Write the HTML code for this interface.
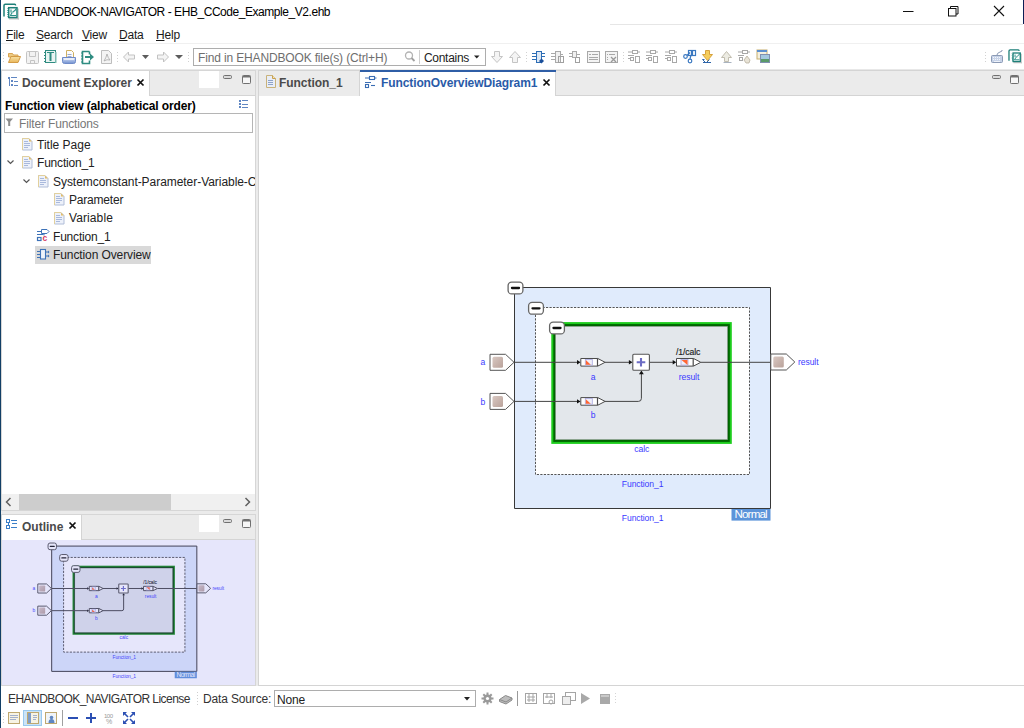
<!DOCTYPE html>
<html><head><meta charset="utf-8">
<style>
*{box-sizing:border-box;margin:0;padding:0}
html,body{width:1024px;height:728px;overflow:hidden;background:#fff}
body{position:relative;font-family:"Liberation Sans",sans-serif;font-size:12px;color:#000}
.a{position:absolute}
.t{position:absolute;white-space:pre;line-height:14px;letter-spacing:-0.45px}
.b{font-weight:bold;letter-spacing:-0.15px}
</style></head><body>

<!-- window edge -->
<div class="a" style="left:0;top:0;width:1px;height:728px;background:#123f66"></div>
<div class="a" style="left:1023px;top:0;width:1px;height:24px;background:#0c1f55"></div>

<!-- TITLE BAR -->
<div id="title" class="a" style="left:1px;top:0;width:1022px;height:24px;background:#fff"></div>
<div class="t" style="left:24px;top:5px;color:#000">EHANDBOOK-NAVIGATOR - EHB_CCode_Example_V2.ehb</div>
<svg class="a" style="left:0;top:0" width="1024" height="24" viewBox="0 0 1024 24">
<path d="M903 11.5h10.5" stroke="#111" stroke-width="1"/>
<rect x="948.5" y="8.5" width="7.5" height="7.5" fill="#fff" stroke="#111"/>
<path d="M950.5 8.5v-2h7.5v7.5h-2" fill="none" stroke="#111"/>
<path d="M994 6l10 10M1004 6l-10 10" stroke="#111" stroke-width="1.1"/>
<g id="appicon">
<rect x="9" y="18" width="10" height="1.5" fill="#c8c8c8"/>
<rect x="17.8" y="8.5" width="1" height="11" fill="#c8c8c8"/>
<path d="M4 16.5v-11q0-1.3 1.3-1.3h9.5q0.8 0 0.8 1.2" fill="none" stroke="#1d7f78" stroke-width="1.5"/>
<rect x="8.7" y="7.7" width="8.3" height="9.8" fill="#fbfdfd" stroke="#1d7f78" stroke-width="1.5"/>
<path d="M7.5 8.5l1 1-1 1 1 1-1 1 1 1-1 1 1 1-1 1" fill="none" stroke="#2a8f87" stroke-width="0.9"/>
<path d="M10.5 15.5q1-3 3-4t3-3.5M11 9.5v3M10 15.5h6" fill="none" stroke="#2a8f87" stroke-width="1.1"/>
<circle cx="12.5" cy="12.5" r="1" fill="#8cc7c1"/>
</g>
</svg>

<div class="a" style="left:610px;top:24px;width:413px;height:1px;background:#e6e6e6"></div>
<!-- MENU -->
<div class="t" style="left:6px;top:28px;letter-spacing:-0.2px;color:#1a1a1a"><u>F</u>ile</div>
<div class="t" style="left:36px;top:28px;letter-spacing:-0.2px;color:#1a1a1a"><u>S</u>earch</div>
<div class="t" style="left:82px;top:28px;letter-spacing:-0.2px;color:#1a1a1a"><u>V</u>iew</div>
<div class="t" style="left:119px;top:28px;letter-spacing:-0.2px;color:#1a1a1a"><u>D</u>ata</div>
<div class="t" style="left:156px;top:28px;letter-spacing:-0.2px;color:#1a1a1a"><u>H</u>elp</div>
<div class="a" style="left:1px;top:43px;width:1023px;height:1px;background:#f0f0f0"></div>

<!-- TOOLBAR -->
<svg class="a" style="left:0;top:44px" width="1024" height="25" viewBox="0 44 1024 25">
<defs>
<g id="grip" fill="#d2d2d2"><rect x="0" y="0" width="1" height="1"/><rect x="0" y="3" width="1" height="1"/><rect x="0" y="6" width="1" height="1"/><rect x="0" y="9" width="1" height="1"/></g>
<linearGradient id="gfold" x1="0" y1="0" x2="0" y2="1"><stop offset="0" stop-color="#f7e2a6"/><stop offset="1" stop-color="#e9b65a"/></linearGradient>
<linearGradient id="gtray" x1="0" y1="0" x2="0" y2="1"><stop offset="0" stop-color="#dfe7f7"/><stop offset="1" stop-color="#6f8fd0"/></linearGradient>
</defs>
<use href="#grip" x="3" y="52"/>
<!-- folder -->
<path d="M8.5 53.5h4l1 1.5h4.5v2h-9.5z" fill="#eccb83" stroke="#d9a453" stroke-width="1"/>
<path d="M8.5 62.5l2.5-6h9.5l-2.5 6z" fill="url(#gfold)" stroke="#d39b45" stroke-width="1"/>
<!-- save (disabled) -->
<rect x="26.5" y="51.5" width="12" height="12" rx="1" fill="#f2f2f2" stroke="#c4c4c4"/>
<path d="M29.5 51.5v5h6v-5M30.5 63.5v-3h4v3" fill="none" stroke="#c4c4c4"/>
<!-- notebook teal -->
<rect x="45.5" y="50.5" width="10" height="12" fill="#e9f4f2" stroke="#2f8c81"/>
<rect x="47" y="52" width="7" height="1" fill="#2f8c81"/>
<path d="M44 52.5h2M44 55.5h2M44 58.5h2M44 61.5h2" stroke="#2f8c81"/>
<rect x="49.5" y="53" width="2" height="8" fill="#2f8c81"/>
<rect x="55" y="52" width="1.5" height="11" fill="#7bb9b0"/>
<!-- print -->
<path d="M66.5 50.5h5l2 2v6h-7z" fill="#fbfbfb" stroke="#d0b060"/>
<path d="M67.5 54.5h4M67.5 56.5h4" stroke="#9aaad0"/>
<path d="M62.5 57.5h13v4q0 2-2 2h-9q-2 0-2-2z" fill="url(#gtray)" stroke="#6f8bc8"/>
<rect x="64" y="58" width="10" height="2" fill="#e9eef9"/>
<!-- export -->
<path d="M89.5 51.5h-7v12h7v-3M89.5 51.5v3" fill="none" stroke="#2f8c81" stroke-width="1.6"/>
<path d="M81 53h2M81 56h2M81 59h2M81 62h2" stroke="#2f8c81"/>
<path d="M85 56h5v-2.5l4 3.5-4 3.5v-2.5h-5z" fill="#2f8c81"/>
<!-- pdf disabled -->
<path d="M101.5 50.5h7l3 3v10h-10z" fill="#f4f4f4" stroke="#bdbdbd"/>
<path d="M104 61q2-3 3-7q1 4 3 6q-3-1-6 1z" fill="none" stroke="#a8a8a8" stroke-width="0.8"/>
<use href="#grip" x="117" y="52"/>
<!-- back -->
<path d="M123.5 57l5-5v3h6v4h-6v3z" fill="#f4f4f4" stroke="#c2c2c2"/>
<path d="M142 55h7l-3.5 4z" fill="#5c5c5c"/>
<path d="M168.5 57l-5-5v3h-6v4h6v3z" fill="#f4f4f4" stroke="#c2c2c2"/>
<path d="M175 55h8l-4 4z" fill="#5c5c5c"/>
<use href="#grip" x="188" y="52"/>
<!-- find box -->
<rect x="193.5" y="48.5" width="292" height="17" fill="#fff" stroke="#adadad"/>
<rect x="419" y="50" width="1" height="14" fill="#cfcfcf"/>
<circle cx="409" cy="55.5" r="3.5" fill="#fff" stroke="#b3b3b3" stroke-width="1.3"/>
<path d="M411.5 58l3 3" stroke="#a0a0a0" stroke-width="1.8"/>
<path d="M474 55.5h5.5l-2.75 3z" fill="#222"/>
<!-- down/up arrows disabled -->
<path d="M494.5 51.5h5v5h3l-5.5 6-5.5-6h3z" fill="#f4f4f4" stroke="#c4c4c4"/>
<path d="M512.5 62.5h5v-5h3l-5.5-6-5.5 6h3z" fill="#f4f4f4" stroke="#c4c4c4"/>
<use href="#grip" x="526" y="52"/>
<!-- blue chip -->
<rect x="536.5" y="51.5" width="5" height="11" fill="#dce8f5" stroke="#2d6db5"/>
<path d="M532 53.5h4M532 56.5h4M532 59.5h4M542 53.5h3M542 56.5h3" stroke="#2d6db5"/>
<path d="M539 61l2.5-2.5 2.5 2.5-2.5 2.5z" fill="#1a4f9a"/>
<!-- gray chip -->
<rect x="555.5" y="51.5" width="5" height="11" fill="#f0f0f0" stroke="#a9a9a9"/>
<path d="M551 53.5h4M551 56.5h4M551 59.5h4M561 54.5h2" stroke="#a9a9a9"/>
<rect x="558.5" y="56.5" width="5" height="6" fill="none" stroke="#a0a0a0"/>
<!-- gray chip2 -->
<rect x="572.5" y="51.5" width="4" height="6" fill="#f0f0f0" stroke="#a9a9a9"/>
<path d="M569 53.5h3M569 56.5h3M577 54.5h3" stroke="#a9a9a9"/>
<rect x="575.5" y="57.5" width="4" height="5" fill="none" stroke="#a0a0a0"/>
<!-- list -->
<rect x="587.5" y="51.5" width="12" height="11" fill="#f4f4f4" stroke="#a8a8a8"/>
<path d="M589 54.5h2M592 54.5h6M589 57.5h9M589 59.5h9" stroke="#a8a8a8"/>
<!-- list x -->
<rect x="605.5" y="51.5" width="12" height="11" fill="#f4f4f4" stroke="#a8a8a8"/>
<path d="M607 54.5h1M609 54.5h6M607 57.5h1M607 59.5h1" stroke="#a8a8a8"/>
<path d="M611 57l5 5M616 57l-5 5" stroke="#999" stroke-width="1.3"/>
<use href="#grip" x="623" y="52"/>
<!-- network icons -->
<g id="net" fill="none" stroke="#a8a8a8">
<rect x="632.5" y="50.5" width="5" height="3"/>
<path d="M628 52h4M638 52h2M628 55.5h6M628 58.5h2"/>
<rect x="630.5" y="57.5" width="3" height="3"/>
<rect x="635.5" y="56.5" width="4" height="6"/>
</g>
<use href="#net" x="18"/>
<use href="#net" x="37"/>
<!-- blue scissors -->
<g fill="none" stroke="#3a78c0" stroke-width="1.2">
<rect x="688.5" y="50.5" width="3" height="5"/><rect x="692.5" y="50.5" width="3" height="5"/>
<circle cx="685.5" cy="56.5" r="1.8"/><circle cx="690" cy="61" r="1.8"/>
<path d="M687 55.5l3-3M690 59l1-4"/>
</g>
<!-- yellow down -->
<path d="M704.5 59.5h-2l3.5 3.5 3.5-3.5" fill="none" stroke="#2d64a8"/>
<path d="M705.5 50.5h4v4h3l-5 6-5-6h3z" fill="#f5cd5c" stroke="#d6a23e"/>
<path d="M703 62.5h8" stroke="#2d64a8"/>
<!-- gray up -->
<path d="M723.5 62.5h8" stroke="#a9b3c0"/>
<path d="M724.5 61.5v-4h-3l5-6 5 6h-3v4z" fill="#ecebe2" stroke="#c1bdaf"/>
<!-- net hand -->
<g fill="none" stroke="#a8a8a8"><rect x="742.5" y="50.5" width="5" height="3"/><path d="M738 52h4M748 52h2M738 55.5h6"/><rect x="739.5" y="57.5" width="3" height="3"/></g>
<path d="M744 60l3-4 3 4-1 3h-3z" fill="#e8e3d6" stroke="#b8b0a0" stroke-width="0.8"/>
<!-- windows -->
<rect x="757" y="50" width="10" height="9" fill="#f4f0e0" stroke="#c8b070"/>
<rect x="757" y="50" width="10" height="2" fill="#5b8fd0"/>
<rect x="760.5" y="54.5" width="9" height="8" fill="#a4c8e0" stroke="#8090b0"/>
<rect x="761" y="59" width="8" height="3" fill="#5a9a6a"/>
<!-- right side -->
<use href="#grip" x="985" y="52"/>
<rect x="991.5" y="55.5" width="11" height="7" rx="1" fill="#c7d3e8" stroke="#8b9ab5"/>
<path d="M993 57.5h8M993 59.5h8" stroke="#f2f5fb" stroke-width="1" stroke-dasharray="1,1"/><rect x="994" y="61" width="6" height="1" fill="#eef2fa"/>
<path d="M997 55q0-2 3-3t2-2" fill="none" stroke="#8b9ab5"/>
<use href="#appicon" transform="translate(1005.5 46.3) scale(0.87)"/>
</svg>
<div class="t" style="left:198px;top:51px;color:#6e6e6e;letter-spacing:-0.15px">Find in EHANDBOOK file(s) (Ctrl+H)</div>
<div class="t" style="left:424px;top:51px;color:#222;letter-spacing:-0.3px">Contains</div>

<div class="a" style="left:1px;top:69px;width:1023px;height:2px;background:#e8e8e8"></div>

<div class="a" style="left:1px;top:71px;width:1023px;height:615px;background:#ebebeb"></div>
<!-- LEFT TOP PANEL -->
<div class="a" style="left:1px;top:70px;width:255px;height:441px;border:1px solid #d6d6d6;background:#fff"></div>
<div class="a" style="left:149px;top:71px;width:106px;height:25px;background:#ebebeb;border-bottom:1px solid #d4d4d4;border-left:1px solid #d4d4d4"></div>

<!-- Document Explorer tab -->
<svg class="a" style="left:0;top:70px" width="258" height="200" viewBox="0 70 258 200">
<!-- tab icon: tree -->
<g fill="#5f86c2"><rect x="8" y="77" width="2" height="2"/><rect x="11" y="77" width="6" height="1"/><rect x="9" y="79" width="1" height="7"/><rect x="11" y="80" width="2" height="2"/><rect x="14" y="81" width="4" height="1"/><rect x="11" y="84" width="2" height="2"/><rect x="14" y="85" width="4" height="1"/></g>
<path d="M137.5 79.5l6 6M143.5 79.5l-6 6" stroke="#111" stroke-width="1.7"/>
<rect x="199" y="71" width="20" height="17" fill="#fff"/>
<rect x="223.5" y="75.5" width="8" height="3" rx="1" fill="#dadada" stroke="#707070"/>
<rect x="242.5" y="75.5" width="8" height="8" rx="0.8" fill="#f6f6f6" stroke="#707070"/>
<rect x="243" y="76" width="7" height="1.5" fill="#707070"/>
<!-- function view options icon -->
<g fill="#5f86c2"><rect x="239" y="100" width="2" height="2"/><rect x="242" y="100" width="6" height="1"/><rect x="239" y="103" width="2" height="2"/><rect x="242" y="104" width="6" height="1"/><rect x="239" y="106" width="2" height="2"/><rect x="242" y="107" width="6" height="1"/></g>
<!-- filter box -->
<rect x="4.5" y="113.5" width="248" height="19" fill="#fff" stroke="#b5b5b5"/>
<path d="M5.5 118.5h7.5l-2.8 3.2v4.3h-2v-4.3z" fill="#8c8c8c"/>
<!-- tree icons -->
<defs>
<g id="doc"><path d="M0.5 0.5h6.5l3 3v8.5h-9.5z" fill="#edf1fa" stroke="#b0bdd8"/><path d="M0.5 12v-11.5h6.5" fill="none" stroke="#e2d09c"/><path d="M7 0.5v3h3z" fill="#e3bd68"/><rect x="2" y="3" width="4" height="1" fill="#a9b9dc"/><rect x="2" y="5" width="6" height="1" fill="#a9b9dc"/><rect x="2" y="7" width="6" height="1" fill="#a9b9dc"/><rect x="2" y="9" width="4" height="1" fill="#a9b9dc"/></g>
</defs>
<use href="#doc" x="22" y="138"/>
<use href="#doc" x="22" y="156"/>
<use href="#doc" x="38" y="175"/>
<use href="#doc" x="54" y="193"/>
<use href="#doc" x="54" y="212"/>
<path d="M7.5 160.5l3 3 3-3" fill="none" stroke="#555" stroke-width="1.2"/>
<path d="M23.5 179.5l3 3 3-3" fill="none" stroke="#555" stroke-width="1.2"/>
<!-- function_1 network icon -->
<path d="M41.5 229.5h5.5l2 2-2 2h-5.5z" fill="#fff" stroke="#3d72b8"/>
<path d="M37 231.5h4.5M37 234.5h6.5M44 233.5v2" stroke="#3d72b8" stroke-width="1"/>
<rect x="37.5" y="237.5" width="3.5" height="3" fill="#fff" stroke="#3d72b8" stroke-width="1.2"/>
<text x="42.6" y="241" font-family="Liberation Sans" font-size="8.5" font-weight="bold" fill="#d63a5f">c</text>
<rect x="35" y="246" width="116" height="18" fill="#d9d9d9"/>
<rect x="40.5" y="249.5" width="5" height="9.5" fill="#eef3fa" stroke="#3d72b8" stroke-width="1.1"/><path d="M37 251.5h3M37 254.5h3M37 257.5h3M46 252h2.5M46 256h2.5" stroke="#3d72b8"/><path d="M48 250.5l1.5 1.5-1.5 1.5zM48 254.5l1.5 1.5-1.5 1.5z" fill="#3d72b8"/>
</svg>
<div class="t b" style="left:22px;top:76px;color:#4a4a4a;letter-spacing:-0.05px">Document Explorer</div>
<div class="t b" style="left:5px;top:99px;color:#000;letter-spacing:-0.12px">Function view (alphabetical order)</div>
<div class="t" style="left:19px;top:117px;color:#777;letter-spacing:-0.15px">Filter Functions</div>
<div class="t" style="left:37px;top:138px;color:#222;letter-spacing:0px">Title Page</div>
<div class="t" style="left:37px;top:156px;color:#222;letter-spacing:-0.2px">Function_1</div>
<div class="a" style="left:53px;top:174px;width:202px;height:16px;overflow:hidden"><div class="t" style="left:0;top:0.6px;color:#222;letter-spacing:-0.05px">Systemconstant-Parameter-Variable-Class</div></div>
<div class="t" style="left:69px;top:193px;color:#222;letter-spacing:-0.2px">Parameter</div>
<div class="t" style="left:69px;top:211px;color:#222;letter-spacing:0.1px">Variable</div>
<div class="t" style="left:53px;top:230px;color:#222;letter-spacing:-0.2px">Function_1</div>
<div class="t" style="left:53px;top:248px;color:#222;letter-spacing:-0.1px">Function Overview</div>
<!-- h scrollbar -->
<div class="a" style="left:2px;top:494px;width:253px;height:16px;background:#f0f0f0"></div>
<div class="a" style="left:19px;top:494px;width:152px;height:16px;background:#cdcdcd"></div>
<svg class="a" style="left:0;top:494px" width="258" height="16"><path d="M10.5 4l-4 4 4 4M245.5 4l4 4-4 4" fill="none" stroke="#606060" stroke-width="1.5"/></svg>

<!-- LEFT BOTTOM PANEL -->
<div class="a" style="left:1px;top:514px;width:255px;height:172px;border:1px solid #d6d6d6;background:#fff"></div>
<div class="a" style="left:81px;top:515px;width:174px;height:25px;background:#ebebeb;border-bottom:1px solid #d4d4d4;border-left:1px solid #d4d4d4"></div>

<svg class="a" style="left:0;top:514px" width="258" height="172" viewBox="0 514 258 172">
<g fill="none" stroke="#3b7fc8" stroke-width="1"><rect x="6.5" y="519.5" width="3" height="3"/><rect x="6.5" y="525.5" width="3" height="3"/></g>
<g fill="#3b7fc8"><rect x="11" y="520" width="6" height="1"/><rect x="12" y="523" width="5" height="1"/><rect x="11" y="527" width="6" height="1"/><rect x="8" y="522" width="1" height="4"/></g>
<path d="M69.5 522.5l6 6M75.5 522.5l-6 6" stroke="#111" stroke-width="1.7"/>
<rect x="199" y="515" width="20" height="17" fill="#fff"/>
<rect x="223.5" y="519.5" width="8" height="3" rx="1" fill="#dadada" stroke="#707070"/>
<rect x="242.5" y="519.5" width="8" height="8" rx="0.8" fill="#f6f6f6" stroke="#707070"/>
<rect x="243" y="520" width="7" height="1.5" fill="#707070"/>
<rect x="2" y="540" width="253" height="145" fill="#fff"/>
<g transform="translate(-240.04 383.07) scale(0.567)" style="--g1:#128f12;--g2:#003c00;--bs:#555;--bw:1"><use href="#diag"/></g>
<rect x="2" y="540" width="253" height="145" fill="rgb(118,118,232)" fill-opacity="0.185"/>
</svg>
<div class="t b" style="left:22px;top:520px;color:#4a4a4a;letter-spacing:0px">Outline</div>

<!-- RIGHT PANEL -->
<div class="a" style="left:258px;top:70px;width:766px;height:616px;border:1px solid #d4d4d4;border-right:none;background:#fff"></div>
<div class="a" style="left:259px;top:71px;width:765px;height:25px;background:#ebebeb;border-bottom:1px solid #d4d4d4"></div>
<!-- right tabs -->
<div class="a" style="left:259px;top:71px;width:101px;height:25px;background:#ebebeb;border-right:1px solid #d4d4d4"></div>
<div class="a" style="left:360px;top:70px;width:196px;height:26px;background:#fff;border-right:1px solid #d4d4d4"></div>
<div class="a" style="left:360px;top:70px;width:196px;height:2px;background:#2f5ea6"></div>
<svg class="a" style="left:258px;top:70px" width="766" height="26" viewBox="258 70 766 26">
<path d="M266.5 75.5h6l3 3v9h-9z" fill="#e8edf7" stroke="#c9b27a"/><path d="M272.5 75.5v3h3" fill="#f3e2b4" stroke="#c9a050"/><path d="M268 80.5h5M268 82.5h5M268 84.5h5" stroke="#8ea3c9"/>
<g fill="none" stroke="#3a6db3" stroke-width="1.1"><rect x="369.5" y="76.5" width="5" height="3"/><path d="M365 78h4.5M374.5 78h2M365 82.5h6"/><rect x="365.5" y="84.5" width="3" height="3"/><path d="M371 85.5h4"/></g>
<path d="M543.5 79.5l6 6M549.5 79.5l-6 6" stroke="#111" stroke-width="1.7"/>
<rect x="992.5" y="75.5" width="8" height="3" rx="1" fill="#dadada" stroke="#707070"/>
<rect x="1010.5" y="75.5" width="8" height="8" rx="0.8" fill="#f6f6f6" stroke="#707070"/>
<rect x="1011" y="76" width="7" height="1.5" fill="#707070"/>
</svg>
<div class="t b" style="left:279px;top:76px;color:#4a4a4a;letter-spacing:-0.05px">Function_1</div>
<div class="t b" style="left:381px;top:76px;color:#2a5ba8;letter-spacing:-0.1px">FunctionOverviewDiagram1</div>

<svg width="0" height="0" style="position:absolute">
<defs>
<linearGradient id="gport" x1="0" y1="0" x2="1" y2="1"><stop offset="0" stop-color="#d9c8c2"/><stop offset="1" stop-color="#b9a29a"/></linearGradient>
<g id="btn"><rect x="0.6" y="0.6" width="14.8" height="11.8" rx="3.5" fill="#fff" style="stroke:var(--bs,#666);stroke-width:var(--bw,1.3)" vector-effect="non-scaling-stroke"/><path d="M4.5 6.5h7" stroke="#111" stroke-width="2.3" stroke-linecap="round"/></g>
<g id="blk">
<path d="M0.5 -3.8h17l7.3 3.8-7.3 3.8h-17z" fill="#fff" stroke="#4a4a4a" vector-effect="non-scaling-stroke" stroke-linejoin="round"/>
<path d="M17.2 -3.8v7.6" stroke="#4a4a4a" vector-effect="non-scaling-stroke" stroke-width="1.2"/>
<rect x="5" y="-2.8" width="7" height="5.6" fill="#f0f0fa" stroke="#a9a9e0" stroke-width="0.8"/>
<path d="M5.5 -2.2v4.6h5z" fill="#ff6633"/>
</g>
<g id="blk2">
<path d="M0.5 -3.8h17l7.3 3.8-7.3 3.8h-17z" fill="#fff" stroke="#4a4a4a" vector-effect="non-scaling-stroke" stroke-linejoin="round"/>
<path d="M17.2 -3.8v7.6" stroke="#4a4a4a" vector-effect="non-scaling-stroke" stroke-width="1.2"/>
<rect x="5" y="-2.8" width="7" height="5.6" fill="#f0f0fa" stroke="#a9a9e0" stroke-width="0.8"/>
<path d="M5.5 -2.2h6v4.8z" fill="#ff6633"/>
</g>
<g id="ah"><path d="M-3.6 -2.2l3.6 2.2-3.6 2.2z" fill="#111"/></g>
<g id="port">
<path d="M0.5 0.5h15.5l8.5 8-8.5 8h-15.5z" fill="#fff" stroke="#555" vector-effect="non-scaling-stroke"/>
<rect x="3" y="3" width="10.5" height="11" rx="1.5" fill="url(#gport)"/>
</g>
<g id="diag" font-family="Liberation Sans">
<!-- outer -->
<rect x="514.5" y="287.5" width="256" height="221" fill="#e0ebfc" stroke="#383838" vector-effect="non-scaling-stroke"/>
<!-- dashed -->
<rect x="535.5" y="307.5" width="214" height="167" fill="#fff" stroke="#555" vector-effect="non-scaling-stroke" stroke-dasharray="2.2,1.3"/>
<!-- green -->
<rect x="551.3" y="322.1" width="180.5" height="121.8" style="fill:var(--g1,#1ccc1c)"/>
<rect x="553.3" y="324.1" width="176.5" height="117.8" style="fill:var(--g2,#006400)"/>
<rect x="555.5" y="326.3" width="172.1" height="113.4" fill="#e3e7eb" stroke="#7a8a7a" stroke-width="0.5"/>
<!-- lines -->
<path d="M514 362.3h63M605 362.3h24.5M649.7 362.3h23.5M701 362.3h69.5" stroke="#444" vector-effect="non-scaling-stroke" stroke-width="1"/>
<path d="M514 401.4h63M605 401.4h33.4q3 0 3-3v-24.5" fill="none" stroke="#444" vector-effect="non-scaling-stroke" stroke-width="1"/>
<use href="#ah" x="580.6" y="362.3"/>
<use href="#ah" x="580.6" y="401.4"/>
<use href="#ah" x="632.5" y="362.3"/>
<use href="#ah" x="676.3" y="362.3"/>
<path d="M641.4 370.6l2.4 3.6h-4.8z" fill="#111"/>
<use href="#blk" x="580.3" y="362.3"/>
<use href="#blk" x="580.3" y="401.4"/>
<use href="#blk2" x="676" y="362.3"/>
<!-- sum -->
<rect x="632.8" y="354.3" width="16.6" height="16" rx="1" fill="#fff" stroke="#555" vector-effect="non-scaling-stroke" stroke-width="1.1"/>
<path d="M636.7 362.3h8.6M641 358v8.6" stroke="#6c6cc4" stroke-width="2.1"/>
<!-- ports -->
<use href="#port" x="489.5" y="353.8"/>
<use href="#port" x="489.5" y="392.9"/>
<use href="#port" x="770.3" y="353.5"/>
<!-- buttons -->
<use href="#btn" x="507.5" y="281.5"/>
<use href="#btn" x="528" y="301.8"/>
<use href="#btn" x="549" y="321.5"/>
<!-- labels -->
<g fill="#3a3aff" font-size="8.6" letter-spacing="-0.1">
<text x="480.6" y="365.3">a</text>
<text x="480.6" y="404.5">b</text>
<text x="590.8" y="379.8">a</text>
<text x="590.8" y="418.2">b</text>
<text x="678.8" y="379.8">result</text>
<text x="798" y="365.3">result</text>
<text x="634.3" y="452">calc</text>
<text x="621.8" y="486.6">Function_1</text>
<text x="621.8" y="521">Function_1</text>
</g>
<text x="676" y="354.5" font-size="8.6" fill="#222" letter-spacing="-0.1" stroke="#222" stroke-width="0.15">/1/calc</text>
<rect x="731.5" y="509" width="39" height="11.6" fill="#5c94da"/>
<text x="734.5" y="517.8" font-size="11.6" fill="#fff" letter-spacing="-0.85">Normal</text>
</g>
</defs>
</svg>
<svg class="a" style="left:0;top:0" width="1024" height="728" viewBox="0 0 1024 728"><use href="#diag"/></svg>

<!-- STATUS -->
<div class="t" style="left:8px;top:692px;color:#333;letter-spacing:-0.55px">EHANDBOOK_NAVIGATOR License</div>
<div class="t" style="left:203px;top:692px;color:#333;letter-spacing:-0.15px">Data Source:</div>

<svg class="a" style="left:0;top:686px" width="1024" height="42" viewBox="0 686 1024 42">
<g fill="#cfcfcf"><rect x="197" y="692" width="1" height="1"/><rect x="197" y="695" width="1" height="1"/><rect x="197" y="698" width="1" height="1"/><rect x="197" y="701" width="1" height="1"/><rect x="197" y="704" width="1" height="1"/></g>
<rect x="274.5" y="690.5" width="201" height="16" fill="#fff" stroke="#adadad"/>
<path d="M464 697h6l-3 3.5z" fill="#222"/>
<!-- gear -->
<g transform="translate(487.5 698.5)"><circle r="4" fill="#9a9a9a"/><g stroke="#9a9a9a" stroke-width="2"><path d="M0-6v12M-6 0h12M-4.2-4.2l8.4 8.4M4.2-4.2l-8.4 8.4"/></g><circle r="1.6" fill="#fff"/></g>
<!-- disk -->
<path d="M499.5 699.5l6-4 6.5 2.5v2l-6 4-6.5-2.5z" fill="#bdbdbd" stroke="#8a8a8a"/>
<path d="M499.5 699.5l6.5 2.5 6-4" fill="none" stroke="#8a8a8a"/>
<rect x="517" y="691" width="1" height="15" fill="#9a9a9a"/>
<g fill="none" stroke="#a5a5a5"><rect x="525.5" y="693.5" width="11" height="10"/><path d="M527 697h8M527 700h8M529 694v8M533 694v8"/></g>
<g fill="none" stroke="#a5a5a5"><rect x="543.5" y="693.5" width="11" height="10"/><path d="M545 697h8M547 694v4M551 694v4"/><circle cx="551" cy="702" r="2"/></g>
<g fill="none" stroke="#a5a5a5"><rect x="565.5" y="692.5" width="10" height="8"/><rect x="562.5" y="696.5" width="8" height="8" fill="#eee"/></g>
<path d="M581 693v11l9-5.5z" fill="#a9a9a9"/>
<rect x="600" y="694" width="10" height="10" fill="#a9a9a9"/>
<rect x="601" y="695" width="8" height="2" fill="#c9c9c9"/>
<g fill="#d5d5d5"><rect x="615" y="693" width="1" height="1"/><rect x="615" y="696" width="1" height="1"/><rect x="615" y="699" width="1" height="1"/><rect x="615" y="702" width="1" height="1"/></g>
<!-- bottom toolbar -->
<g fill="#cfcfcf"><rect x="3" y="713" width="1" height="1"/><rect x="3" y="716" width="1" height="1"/><rect x="3" y="719" width="1" height="1"/><rect x="3" y="722" width="1" height="1"/></g>
<rect x="8.5" y="712.5" width="11" height="11" fill="#f7f3e4" stroke="#bfa870"/>
<rect x="10" y="715" width="8" height="1" fill="#a3b0cc"/><rect x="10" y="717" width="8" height="1" fill="#a3b0cc"/><rect x="10" y="719" width="6" height="1" fill="#a3b0cc"/>
<rect x="23.5" y="710.5" width="18" height="15" fill="#cce4f7" stroke="#99c9ef"/>
<rect x="27.5" y="712.5" width="11" height="11" fill="#f7f3e4" stroke="#bfa870"/>
<rect x="28" y="713" width="3" height="10" fill="#7f9dc8"/>
<rect x="33" y="715" width="4" height="1" fill="#a3b0cc"/><rect x="33" y="717" width="4" height="1" fill="#a3b0cc"/><rect x="33" y="719" width="3" height="1" fill="#a3b0cc"/>
<rect x="45.5" y="712.5" width="11" height="11" fill="#f0f4f8" stroke="#bfa870"/>
<circle cx="51.5" cy="717.5" r="1.8" fill="#5f86c2"/><path d="M48.5 723q0-4 3-4t3 4z" fill="#5f86c2"/>
<rect x="62" y="710" width="1" height="16" fill="#a0a0a0"/>
<rect x="68" y="717" width="10" height="2" fill="#2b4fb3"/>
<path d="M86 718h10M91 713v10" stroke="#2b4fb3" stroke-width="2"/>
<text x="104" y="718" font-family="Liberation Sans" font-size="6" fill="#999" letter-spacing="-0.5">100</text>
<text x="106" y="724" font-family="Liberation Sans" font-size="7" fill="#999">%</text>
<g stroke="#2b4fb3" stroke-width="1.6" fill="none"><path d="M124 713l4 4M134 713l-4 4M124 723l4-4M134 723l-4-4"/></g>
<g fill="#2b4fb3"><path d="M123 712h4l-4 4z"/><path d="M135 712h-4l4 4z"/><path d="M123 724h4l-4-4z"/><path d="M135 724h-4l4-4z"/></g>
</svg>
<div class="t" style="left:277px;top:693px;color:#222;letter-spacing:-0.2px">None</div>

</body></html>
